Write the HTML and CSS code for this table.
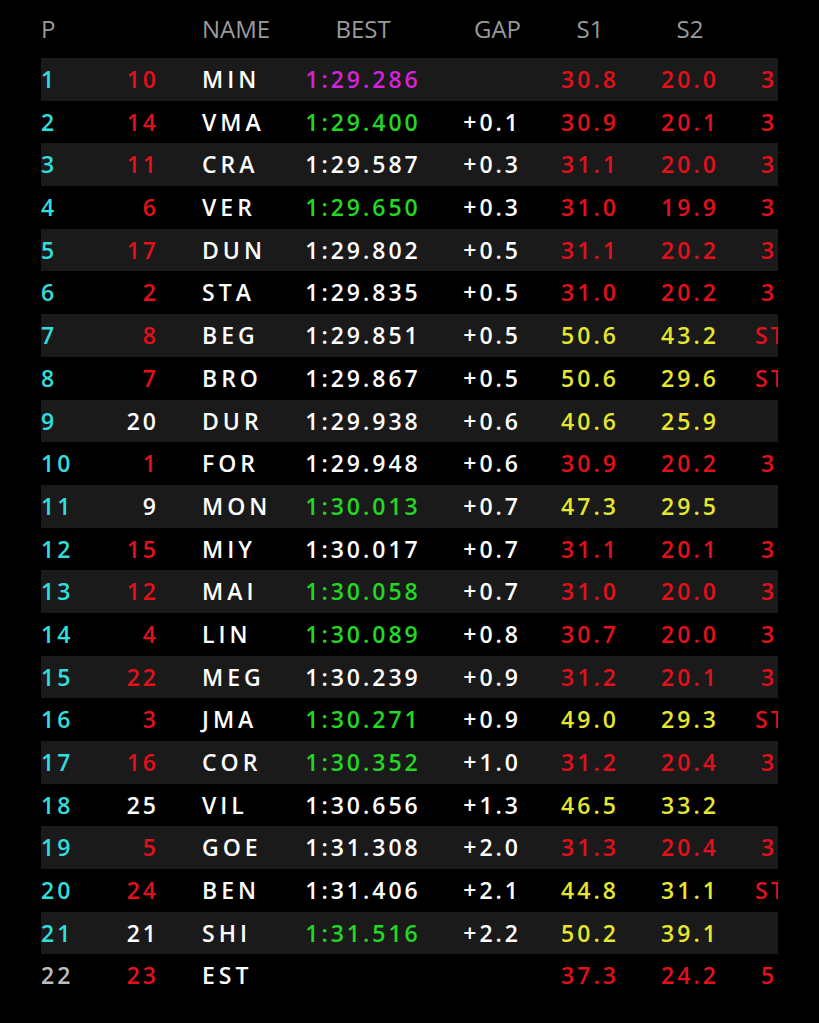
FILE: index.html
```html
<!DOCTYPE html>
<html>
<head>
<meta charset="utf-8">
<link rel="stylesheet" href="styles.css">
</head>
<body>
<div class="board">
  <div class="row head">
    <div class="pos">P</div><div class="no"></div><div class="name">NAME</div><div class="best">BEST</div><div class="gap">GAP</div><div class="s1">S1</div><div class="s2">S2</div><div class="s3"></div>
  </div>
  <div class="row alt"><div class="pos cy">1</div><div class="no rd">10</div><div class="name">MIN</div><div class="best mg">1:29.286</div><div class="gap"></div><div class="s1 rd">30.8</div><div class="s2 rd">20.0</div><div class="s3 rd">30.4</div></div>
  <div class="row"><div class="pos cy">2</div><div class="no rd">14</div><div class="name">VMA</div><div class="best gr">1:29.400</div><div class="gap">+0.1</div><div class="s1 rd">30.9</div><div class="s2 rd">20.1</div><div class="s3 rd">38.4</div></div>
  <div class="row alt"><div class="pos cy">3</div><div class="no rd">11</div><div class="name">CRA</div><div class="best">1:29.587</div><div class="gap">+0.3</div><div class="s1 rd">31.1</div><div class="s2 rd">20.0</div><div class="s3 rd">38.5</div></div>
  <div class="row"><div class="pos cy">4</div><div class="no rd">6</div><div class="name">VER</div><div class="best gr">1:29.650</div><div class="gap">+0.3</div><div class="s1 rd">31.0</div><div class="s2 rd">19.9</div><div class="s3 rd">38.7</div></div>
  <div class="row alt"><div class="pos cy">5</div><div class="no rd">17</div><div class="name">DUN</div><div class="best">1:29.802</div><div class="gap">+0.5</div><div class="s1 rd">31.1</div><div class="s2 rd">20.2</div><div class="s3 rd">38.5</div></div>
  <div class="row"><div class="pos cy">6</div><div class="no rd">2</div><div class="name">STA</div><div class="best">1:29.835</div><div class="gap">+0.5</div><div class="s1 rd">31.0</div><div class="s2 rd">20.2</div><div class="s3 rd">38.6</div></div>
  <div class="row alt"><div class="pos cy">7</div><div class="no rd">8</div><div class="name">BEG</div><div class="best">1:29.851</div><div class="gap">+0.5</div><div class="s1 yl">50.6</div><div class="s2 yl">43.2</div><div class="s3 rd">STOP</div></div>
  <div class="row"><div class="pos cy">8</div><div class="no rd">7</div><div class="name">BRO</div><div class="best">1:29.867</div><div class="gap">+0.5</div><div class="s1 yl">50.6</div><div class="s2 yl">29.6</div><div class="s3 rd">STOP</div></div>
  <div class="row alt"><div class="pos cy">9</div><div class="no">20</div><div class="name">DUR</div><div class="best">1:29.938</div><div class="gap">+0.6</div><div class="s1 yl">40.6</div><div class="s2 yl">25.9</div><div class="s3"></div></div>
  <div class="row"><div class="pos cy">10</div><div class="no rd">1</div><div class="name">FOR</div><div class="best">1:29.948</div><div class="gap">+0.6</div><div class="s1 rd">30.9</div><div class="s2 rd">20.2</div><div class="s3 rd">38.8</div></div>
  <div class="row alt"><div class="pos cy">11</div><div class="no">9</div><div class="name">MON</div><div class="best gr">1:30.013</div><div class="gap">+0.7</div><div class="s1 yl">47.3</div><div class="s2 yl">29.5</div><div class="s3"></div></div>
  <div class="row"><div class="pos cy">12</div><div class="no rd">15</div><div class="name">MIY</div><div class="best">1:30.017</div><div class="gap">+0.7</div><div class="s1 rd">31.1</div><div class="s2 rd">20.1</div><div class="s3 rd">38.8</div></div>
  <div class="row alt"><div class="pos cy">13</div><div class="no rd">12</div><div class="name">MAI</div><div class="best gr">1:30.058</div><div class="gap">+0.7</div><div class="s1 rd">31.0</div><div class="s2 rd">20.0</div><div class="s3 rd">39.0</div></div>
  <div class="row"><div class="pos cy">14</div><div class="no rd">4</div><div class="name">LIN</div><div class="best gr">1:30.089</div><div class="gap">+0.8</div><div class="s1 rd">30.7</div><div class="s2 rd">20.0</div><div class="s3 rd">39.3</div></div>
  <div class="row alt"><div class="pos cy">15</div><div class="no rd">22</div><div class="name">MEG</div><div class="best">1:30.239</div><div class="gap">+0.9</div><div class="s1 rd">31.2</div><div class="s2 rd">20.1</div><div class="s3 rd">38.9</div></div>
  <div class="row"><div class="pos cy">16</div><div class="no rd">3</div><div class="name">JMA</div><div class="best gr">1:30.271</div><div class="gap">+0.9</div><div class="s1 yl">49.0</div><div class="s2 yl">29.3</div><div class="s3 rd">STOP</div></div>
  <div class="row alt"><div class="pos cy">17</div><div class="no rd">16</div><div class="name">COR</div><div class="best gr">1:30.352</div><div class="gap">+1.0</div><div class="s1 rd">31.2</div><div class="s2 rd">20.4</div><div class="s3 rd">38.7</div></div>
  <div class="row"><div class="pos cy">18</div><div class="no">25</div><div class="name">VIL</div><div class="best">1:30.656</div><div class="gap">+1.3</div><div class="s1 yl">46.5</div><div class="s2 yl">33.2</div><div class="s3"></div></div>
  <div class="row alt"><div class="pos cy">19</div><div class="no rd">5</div><div class="name">GOE</div><div class="best">1:31.308</div><div class="gap">+2.0</div><div class="s1 rd">31.3</div><div class="s2 rd">20.4</div><div class="s3 rd">39.6</div></div>
  <div class="row"><div class="pos cy">20</div><div class="no rd">24</div><div class="name">BEN</div><div class="best">1:31.406</div><div class="gap">+2.1</div><div class="s1 yl">44.8</div><div class="s2 yl">31.1</div><div class="s3 rd">STOP</div></div>
  <div class="row alt"><div class="pos cy">21</div><div class="no">21</div><div class="name">SHI</div><div class="best gr">1:31.516</div><div class="gap">+2.2</div><div class="s1 yl">50.2</div><div class="s2 yl">39.1</div><div class="s3"></div></div>
  <div class="row"><div class="pos gy">22</div><div class="no rd">23</div><div class="name">EST</div><div class="best"></div><div class="gap"></div><div class="s1 rd">37.3</div><div class="s2 rd">24.2</div><div class="s3 rd">51.0</div></div>
</div>
</body>
</html>
```

FILE: styles.css
```css
html, body {
  margin: 0;
  padding: 0;
  background: #000;
}
body {
  font-family: "Open Sans", "Noto Sans", sans-serif;
  color: #fff;
}
.board {
  margin-left: 41px;
  width: 737px;
  overflow: hidden;
  padding-bottom: 26px;
}
.row {
  display: grid;
  grid-template-columns: 75px 43px 144px 120px 98px 138px 62px 138px;
  width: 737px;
  height: 42.7px;
  line-height: 42.7px;
  font-size: 23px;
  font-weight: 600;
  letter-spacing: 3px;
  white-space: nowrap;
}
.row.alt {
  background: #1a1a1a;
}
.row.head {
  height: 58px;
  line-height: 34px;
  padding-top: 12px;
  box-sizing: border-box;
  font-size: 24px;
  font-weight: 500;
  letter-spacing: 0;
  color: #9a9a9a;
}
.pos { text-align: left; }
.no { text-align: right; }
.name { padding-left: 43px; letter-spacing: 4px; }
.head .name { letter-spacing: 0; }
.best { text-align: center; }
.gap { text-align: right; }
.s1, .s2, .s3 { text-align: center; }

.cy { color: #30dede; }
.rd { color: #e2101c; }
.mg { color: #d423d8; }
.gr { color: #22d822; }
.yl { color: #e6e62e; }
.gy { color: #bdbdbd; }
```
